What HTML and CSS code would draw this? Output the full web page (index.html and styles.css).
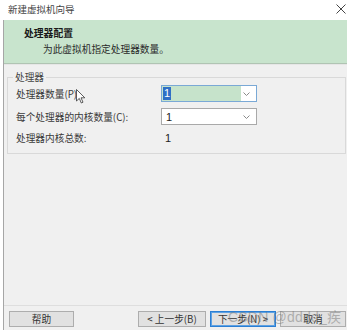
FILE: index.html
```html
<!DOCTYPE html>
<html>
<head>
<meta charset="utf-8">
<link rel="stylesheet" href="styles.css">
</head>
<body>
<div class="window">
  <div class="titlebar">
    <span class="title">新建虚拟机向导</span>
    <svg class="close" width="10" height="10" viewBox="0 0 10 10"><path d="M0.5 0.5 L9.5 9.5 M9.5 0.5 L0.5 9.5" stroke="#444" stroke-width="1" fill="none"/></svg>
  </div>
  <div class="main">
    <div class="header">
      <div class="h-title">处理器配置</div>
      <div class="h-sub">为此虚拟机指定处理器数量。</div>
    </div>
    <div class="content">
      <div class="group">
        <span class="legend">处理器</span>
        <div class="row">
          <span class="label">处理器数量(P):</span>
          <div class="combo focused">
            <span class="fill"><span class="sel">1</span></span>
            <svg class="chev" width="7" height="4" viewBox="0 0 7 4"><path d="M0.5 0.5 L3.5 3.5 L6.5 0.5" stroke="#8a8a8a" fill="none"/></svg>
          </div>
        </div>
        <div class="row">
          <span class="label">每个处理器的内核数量(C):</span>
          <div class="combo">
            <span class="val">1</span>
            <svg class="chev" width="7" height="4" viewBox="0 0 7 4"><path d="M0.5 0.5 L3.5 3.5 L6.5 0.5" stroke="#8a8a8a" fill="none"/></svg>
          </div>
        </div>
        <div class="row total">
          <span class="label">处理器内核总数:</span>
          <span class="tval">1</span>
        </div>
      </div>
    </div>
    <div class="footer">
      <button class="btn help">帮助</button>
      <div class="spacer"></div>
      <button class="btn back">&lt; 上一步(B)</button>
      <button class="btn next">下一步(N) &gt;</button>
      <button class="btn cancel">取消</button>
    </div>
  </div>
  <svg class="cursor" width="10" height="15" viewBox="0 0 10 15"><path d="M0.5 0.5 L0.5 12 L3.3 9.4 L5.3 14 L7 13.2 L5 8.8 L8.8 8.8 Z" fill="#fff" stroke="#333" stroke-width="0.8"/></svg>
  <div class="watermark">CSDN @dddd_疾</div>
</div>
</body>
</html>
```
FILE: styles.css
```css
* { box-sizing: border-box; }
html, body { margin: 0; padding: 0; }
body {
  width: 347px;
  height: 330px;
  background: #ffffff;
  font-family: "Noto Sans CJK SC", "Noto Sans", sans-serif;
  font-size: 9.7px;
  color: #3a3a3a;
  overflow: hidden;
}
.window {
  position: relative;
  width: 347px;
  height: 330px;
  display: flex;
  flex-direction: column;
}
.titlebar {
  height: 20px;
  display: flex;
  align-items: center;
  justify-content: space-between;
  padding: 0 1px 2px 8px;
  background: #fff;
}
.title { font-size: 9.5px; color: #444; }
.main {
  flex: 1;
  margin-left: 3px;
  border-left: 1px solid #a6a6a6;
  background: #f0f0f0;
  display: flex;
  flex-direction: column;
}
.header {
  height: 44px;
  background: #c8e4cd;
  border-bottom: 1px solid #b0c4b3;
  padding: 6px 0 0 20px;
}
.h-title {
  font-weight: bold;
  font-size: 9.8px;
  line-height: 14px;
  color: #1a1a1a;
}
.h-sub {
  margin-top: 2px;
  padding-left: 19px;
  line-height: 14px;
  color: #2a2a2a;
}
.content {
  flex: 1;
  padding: 12px 1px 0 3px;
  border-top: 1px solid #e6e6e6;
}
.group {
  position: relative;
  height: 77px;
  border: 1px solid #d9d9d9;
  padding: 7px 0 0 8px;
}
.legend {
  position: absolute;
  left: 5px;
  top: -8px;
  padding: 0 2px;
  background: #f0f0f0;
  line-height: 14px;
  color: #444;
}
.row {
  display: flex;
  align-items: center;
  height: 17px;
  margin-bottom: 6px;
}
.row.total { margin-top: 3px; height: 14px; }
.label { width: 145px; color: #3a3a3a; }
.combo {
  position: relative;
  width: 96px;
  height: 17px;
  border: 1px solid #a9a9a9;
  background: #fff;
  display: flex;
  align-items: center;
}
.combo.focused { border-color: #7aa9d6; }
.fill {
  width: 79px;
  height: 15px;
  background: #c6e3cb;
  display: flex;
  align-items: center;
  padding-left: 1px;
}
.sel {
  background: #2f6fc6;
  color: #fff;
  font-size: 11px;
  line-height: 13px;
  padding: 0 1px;
  font-family: "Liberation Sans", sans-serif;
}
.val, .tval { padding-left: 4px; font-size: 11px; font-family: "Liberation Sans", sans-serif; color: #222; }
.chev { position: absolute; right: 6px; top: 6px; }
.footer {
  height: 25px;
  border-top: 1px solid #dedede;
  display: flex;
  align-items: flex-start;
  padding: 5px 1px 0 5px;
  gap: 4px;
}
.spacer { flex: 1; }
.btn {
  height: 16px;
  width: 66px;
  border: 1px solid #adadad;
  background: #e1e1e1;
  font-family: "Noto Sans CJK SC", "Liberation Sans", sans-serif;
  font-size: 9.7px;
  color: #333;
  padding: 0;
  line-height: 13px;
}
.help { width: 65px; }
.back { width: 68px; }
.next { border: 1px solid #2b7fd4; box-shadow: inset 0 0 0 1px #5fa2e3; }
.cursor { position: absolute; left: 76px; top: 89px; }
.watermark {
  position: absolute;
  left: 228px;
  top: 306px;
  font-family: "Liberation Sans", "Noto Sans CJK SC", sans-serif;
  font-size: 14px;
  color: rgba(120,120,120,0.5);
  letter-spacing: 0.2px;
  pointer-events: none;
}
```
